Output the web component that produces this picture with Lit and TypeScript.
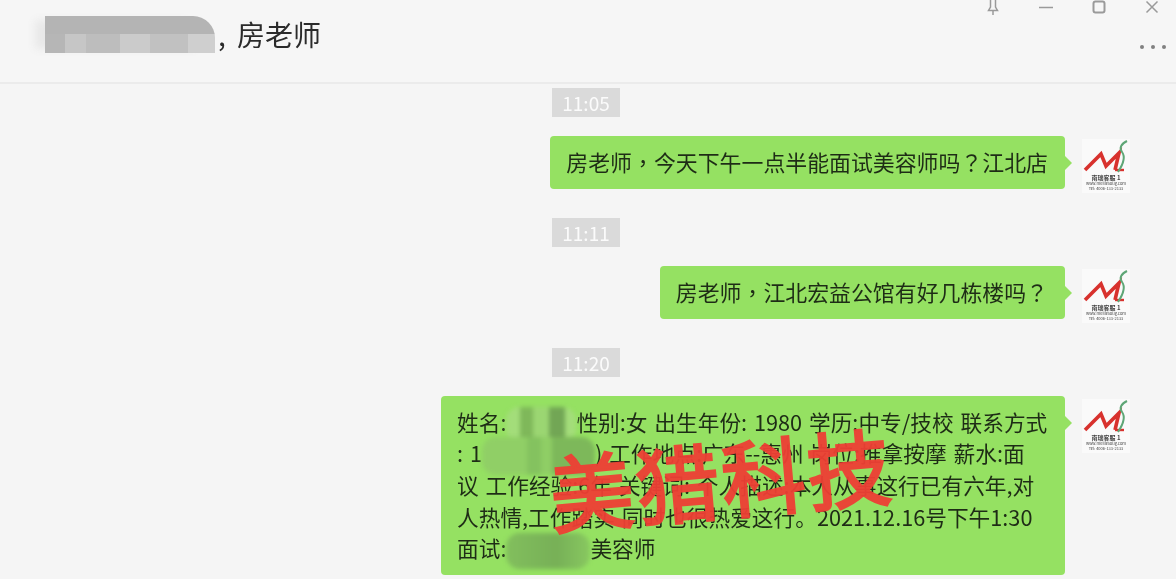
import { LitElement, css, html } from 'lit'
import { customElement, property } from 'lit/decorators.js'

@customElement('chat-avatar')
export class ChatAvatar extends LitElement {
  static styles = css`
    :host {
      display: block;
      width: 48px;
      height: 54px;
      margin: 3px 0 -4px;
      background: #fafafa;
      flex: none;
    }
    svg {
      display: block;
    }
    text {
      font-family: 'Noto Sans CJK SC', 'Liberation Sans', sans-serif;
      text-anchor: middle;
      fill: #444;
    }
  `

  render() {
    return html`
      <svg width="48" height="54" viewBox="0 0 48 54">
        <path d="M3 31 L19 15 L24 27 L37 14 L33 31" fill="none" stroke="#d8322e" stroke-width="3.6" />
        <path d="M33 31 L42 31" stroke="#d8322e" stroke-width="2.4" />
        <path d="M45 2 C39 5 37 9 40 13 C43 17 42 24 36 33" fill="none" stroke="#5fa777" stroke-width="2" />
        <text x="24" y="41" font-size="6" font-weight="700">南瑞客服 1</text>
        <text x="24" y="46" font-size="4">www.meiliesoug.com</text>
        <text x="24" y="51" font-size="4">Tel: 4006-133-2133</text>
      </svg>
    `
  }
}

@customElement('chat-bubble')
export class ChatBubble extends LitElement {
  @property({ type: Boolean }) tall = false

  static styles = css`
    :host {
      display: flex;
      justify-content: flex-end;
      align-items: flex-start;
      gap: 17px;
    }
    .bubble {
      position: relative;
      background: #95e162;
      border-radius: 4px;
      padding: 10px 17px 12px 16px;
      font-size: 21.9px;
      line-height: 31px;
      color: #1e2c16;
      white-space: nowrap;
    }
    .bubble::after {
      content: '';
      position: absolute;
      right: -7px;
      top: 20px;
      border-left: 7px solid #95e162;
      border-top: 7px solid transparent;
      border-bottom: 7px solid transparent;
    }
    .tall {
      font-size: 21.7px;
      line-height: 31.2px;
      word-spacing: 2px;
      padding: 10px 16px 12px 16px;
      width: 592px;
    }
  `

  render() {
    return html`
      <div class="bubble ${this.tall ? 'tall' : ''}"><slot></slot></div>
      <chat-avatar></chat-avatar>
    `
  }
}

@customElement('app-root')
export class AppRoot extends LitElement {
  static styles = css`
    :host {
      display: block;
      height: 579px;
      overflow: hidden;
      background: #f5f5f5;
      font-family: 'Noto Sans CJK SC', 'Liberation Sans', sans-serif;
      filter: blur(0.45px);
    }
    header {
      display: flex;
      justify-content: space-between;
      height: 84px;
      box-sizing: border-box;
      border-bottom: 2px solid #ebebeb;
      background: #f6f6f6;
    }
    .title {
      display: flex;
      align-items: center;
      gap: 3px;
      padding: 0 0 14px 45px;
      font-size: 28px;
      word-spacing: 5px;
      color: #2b2b2b;
      white-space: nowrap;
    }
    .mosaic {
      display: block;
      width: 170px;
      height: 37px;
      border-radius: 0 22px 0 0;
      background:
        linear-gradient(180deg, #b4b4b4 0 50%, transparent 50%),
        linear-gradient(90deg, #b6b6b6 0 12%, #c6c6c6 12% 24%, #bdbdbd 24% 44%, #cbcbcb 44% 62%, #c1c1c1 62% 84%, #cfcfcf 84%);
      box-shadow: -14px 0 8px -4px #e8e8e8;
    }
    .side {
      display: flex;
      flex-direction: column;
      align-items: flex-end;
      padding: 0 10px 0 0;
    }
    .controls {
      display: flex;
      gap: 37px;
      padding-right: 6px;
    }
    .controls svg {
      display: block;
      width: 16px;
      height: 16px;
      fill: none;
      stroke: #9a9a9a;
      stroke-width: 1.5;
    }
    .dots {
      display: flex;
      gap: 7px;
      margin-top: 29px;
    }
    .dots i {
      width: 4px;
      height: 4px;
      border-radius: 50%;
      background: #808080;
    }
    main {
      display: flex;
      flex-direction: column;
      padding: 4px 46px 0 0;
      position: relative;
    }
    .time {
      align-self: flex-start;
      margin: 0 0 19px 552px;
      width: 68px;
      height: 29px;
      background: #dadada;
      color: #fbfbfb;
      font-size: 19px;
      line-height: 29px;
      text-align: center;
    }
    chat-bubble {
      margin-bottom: 29px;
    }
    /* centred full-width punctuation, as in the reference's UI font */
    .p {
      font-family: 'Noto Sans CJK TC', 'Noto Sans CJK SC', sans-serif;
    }
    .redact {
      display: inline-block;
      vertical-align: middle;
      height: 36px;
      margin: -6px 0;
      border-radius: 14px;
      filter: blur(2px);
      background: #8ecb62;
    }
    .r1 {
      width: 70px;
      background: linear-gradient(90deg, #a3dd7a 0 20%, #7fb85a 20% 38%, #9bd672 38% 62%, #72a655 62% 85%, #a3dd7a 85%);
    }
    .r2 {
      width: 113px;
      height: 38px;
      background: linear-gradient(90deg, #90cf66 0 40%, #84c25f 40% 52%, #8fce65 52% 62%, #7db85a 62%);
    }
    .r3 {
      width: 84px;
      background: linear-gradient(90deg, #82bf5d, #77b057 60%, #88c860);
    }
    .watermark {
      position: absolute;
      left: 549px;
      top: 338px;
      font-size: 84px;
      line-height: 110px;
      letter-spacing: 2px;
      color: #ee3f35;
      -webkit-text-stroke: 2.5px #ee3f35;
      opacity: 0.95;
      white-space: nowrap;
      transform: rotate(-5deg);
      pointer-events: none;
    }
  `

  render() {
    return html`
      <header>
        <div class="title"><span class="mosaic"></span><span>, 房老师</span></div>
        <div class="side">
          <div class="controls">
            <svg viewBox="0 0 16 16"><path d="M5.5 0 V7 L3.5 10.5 H12.5 L10.5 7 V0 M8 10.5 V15" /></svg>
            <svg viewBox="0 0 16 16"><path d="M1 7.5 H15" /></svg>
            <svg viewBox="0 0 16 16"><rect x="2.5" y="1.5" width="11" height="11" rx="2" stroke-width="2" /></svg>
            <svg viewBox="0 0 16 16"><path d="M2.5 1.5 L13.5 12.5 M13.5 1.5 L2.5 12.5" /></svg>
          </div>
          <div class="dots"><i></i><i></i><i></i></div>
        </div>
      </header>
      <main>
        <div class="time">11:05</div>
        <chat-bubble>房老师<span class="p">，</span>今天下午一点半能面试美容师吗<span class="p">？</span>江北店</chat-bubble>
        <div class="time">11:11</div>
        <chat-bubble>房老师<span class="p">，</span>江北宏益公馆有好几栋楼吗<span class="p">？</span></chat-bubble>
        <div class="time">11:20</div>
        <chat-bubble tall>
          姓名:<span class="redact r1"></span>性别:女 出生年份: 1980 学历:中专/技校 联系方式<br />
          : 1<span class="redact r2"></span>) 工作地点:广东--惠州 岗位:推拿按摩 薪水:面<br />
          议 工作经验:6年 关键词: 个人描述:本人从事这行已有六年,对<br />
          人热情,工作踏实 同时也很热爱这行。2021.12.16号下午1:30<br />
          面试:<span class="redact r3"></span>美容师
        </chat-bubble>
        <div class="watermark">美猎科技</div>
      </main>
    `
  }
}
